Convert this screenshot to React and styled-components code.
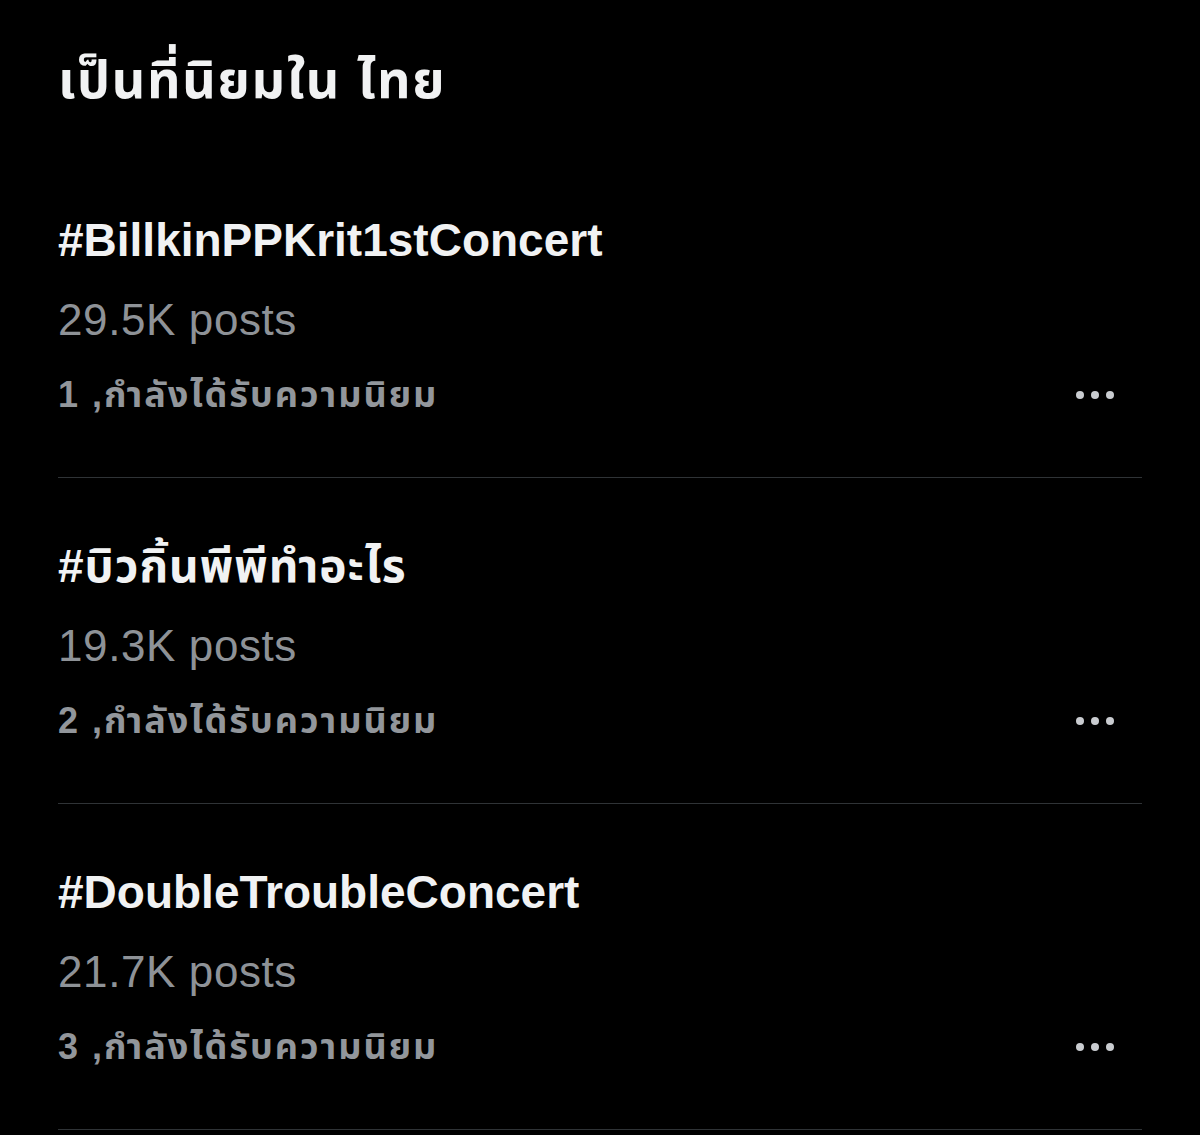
import React from "react";
import styled, { createGlobalStyle } from "styled-components";

const Global = createGlobalStyle`
  html, body { margin: 0; padding: 0; background: #000; }
  body { font-family: "Liberation Sans", "Noto Sans Thai", "Noto Sans", sans-serif; }
`;

const Page = styled.div`
  width: 1200px;
  height: 1135px;
  background: #000;
  overflow: hidden;
  box-sizing: border-box;
  padding: 30px 58px 0 58px;
`;

const Title = styled.h1`
  margin: 0 0 22px 0;
  font-size: 52px;
  line-height: 100px;
  height: 100px;
  font-weight: 700;
  letter-spacing: 1.7px;
  color: #f1f2f3;
`;

const Item = styled.div`
  padding: 48px 0 47px 0;
  border-bottom: 1px solid #2f3336;
`;

const Tag = styled.div`
  font-size: 46px;
  line-height: 80px;
  font-weight: 700;
  letter-spacing: ${(p) => (p.$thai ? "1px" : "0")};
  color: #f1f2f3;
`;

const Posts = styled.div`
  font-size: 44px;
  line-height: 80px;
  letter-spacing: 0.6px;
  color: #8e9297;
`;

const RankRow = styled.div`
  display: flex;
  align-items: center;
  justify-content: space-between;
  height: 70px;
`;

const Rank = styled.div`
  font-size: 36px;
  line-height: 70px;
  font-weight: 700;
  letter-spacing: 2px;
  color: #92969b;
`;

const Dots = styled.div`
  display: flex;
  gap: 7px;
  margin-right: 28px;
`;

const Dot = styled.span`
  width: 8px;
  height: 8px;
  border-radius: 50%;
  background: #c9ccd0;
`;

const trends = [
  { tag: "#BillkinPPKrit1stConcert", posts: "29.5K posts", rank: 1 },
  { tag: "#บิวกิ้นพีพีทำอะไร", posts: "19.3K posts", rank: 2, thai: true },
  { tag: "#DoubleTroubleConcert", posts: "21.7K posts", rank: 3 },
];

export default function App() {
  return (
    <>
      <Global />
      <Page>
        <Title>เป็นที่นิยมใน ไทย</Title>
        {trends.map((t) => (
          <Item key={t.rank}>
            <Tag $thai={t.thai}>{t.tag}</Tag>
            <Posts>{t.posts}</Posts>
            <RankRow>
              <Rank>{t.rank} ,กำลังได้รับความนิยม</Rank>
              <Dots>
                <Dot />
                <Dot />
                <Dot />
              </Dots>
            </RankRow>
          </Item>
        ))}
      </Page>
    </>
  );
}
